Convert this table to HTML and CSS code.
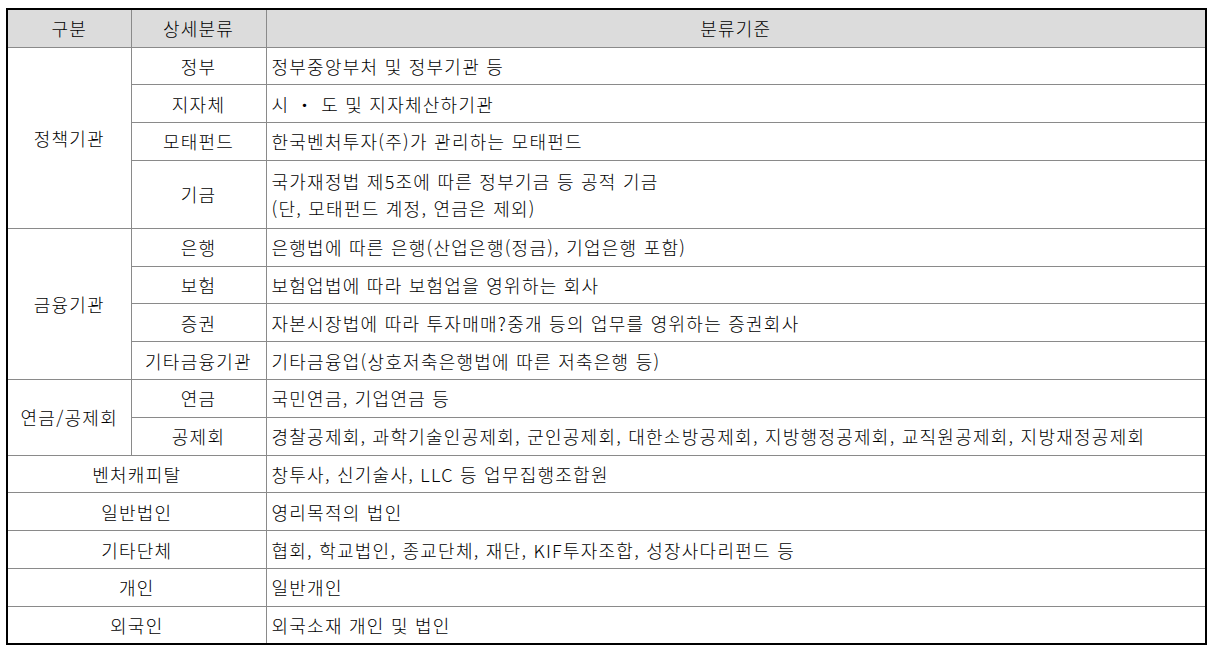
FILE: index.html
```html
<!DOCTYPE html>
<html lang="ko">
<head>
<meta charset="utf-8">
<link rel="stylesheet" href="styles.css">
</head>
<body>
<table class="grid">
  <colgroup>
    <col class="c1"><col class="c2"><col class="c3">
  </colgroup>
  <thead>
    <tr class="head"><th>구분</th><th>상세분류</th><th>분류기준</th></tr>
  </thead>
  <tbody>
    <tr><td class="grp" rowspan="4">정책기관</td><td class="sub">정부</td><td class="desc">정부중앙부처 및 정부기관 등</td></tr>
    <tr><td class="sub">지자체</td><td class="desc">시 ・ 도 및 지자체산하기관</td></tr>
    <tr><td class="sub">모태펀드</td><td class="desc">한국벤처투자(주)가 관리하는 모태펀드</td></tr>
    <tr class="tall"><td class="sub">기금</td><td class="desc"><div class="ln">국가재정법 제5조에 따른 정부기금 등 공적 기금</div><div class="ln">(단, 모태펀드 계정, 연금은 제외)</div></td></tr>
    <tr><td class="grp" rowspan="4">금융기관</td><td class="sub">은행</td><td class="desc">은행법에 따른 은행(산업은행(정금), 기업은행 포함)</td></tr>
    <tr><td class="sub">보험</td><td class="desc">보험업법에 따라 보험업을 영위하는 회사</td></tr>
    <tr><td class="sub">증권</td><td class="desc">자본시장법에 따라 투자매매?중개 등의 업무를 영위하는 증권회사</td></tr>
    <tr><td class="sub">기타금융기관</td><td class="desc">기타금융업(상호저축은행법에 따른 저축은행 등)</td></tr>
    <tr><td class="grp" rowspan="2">연금/공제회</td><td class="sub">연금</td><td class="desc">국민연금, 기업연금 등</td></tr>
    <tr><td class="sub">공제회</td><td class="desc">경찰공제회, 과학기술인공제회, 군인공제회, 대한소방공제회, 지방행정공제회, 교직원공제회, 지방재정공제회</td></tr>
    <tr><td class="grp" colspan="2">벤처캐피탈</td><td class="desc">창투사, 신기술사, LLC 등 업무집행조합원</td></tr>
    <tr><td class="grp" colspan="2">일반법인</td><td class="desc">영리목적의 법인</td></tr>
    <tr><td class="grp" colspan="2">기타단체</td><td class="desc">협회, 학교법인, 종교단체, 재단, KIF투자조합, 성장사다리펀드 등</td></tr>
    <tr><td class="grp" colspan="2">개인</td><td class="desc">일반개인</td></tr>
    <tr><td class="grp" colspan="2">외국인</td><td class="desc">외국소재 개인 및 법인</td></tr>
  </tbody>
</table>
</body>
</html>
```

FILE: styles.css
```css
html, body {
  margin: 0;
  padding: 0;
  background: #ffffff;
}
body {
  padding: 8px 0 0 6px;
  font-family: "Noto Sans CJK KR", "Noto Sans", sans-serif;
  font-size: 18px;
  letter-spacing: 1.25px;
  color: #000;
}
.grid {
  border-collapse: collapse;
  width: 1201px;
  border: 2px solid #000;
  table-layout: fixed;
}
.c1 { width: 124px; }
.c2 { width: 135px; }
.c3 { width: auto; }
.grid th, .grid td {
  border: 1px solid #8a8a8a;
  padding: 0;
  height: 37.8px;
  box-sizing: border-box;
  font-weight: 300;
  line-height: 1;
  white-space: nowrap;
}
.grid th {
  background: #dcdcdc;
  text-align: center;
  height: 38px;
}
.grp, .sub {
  text-align: center;
  padding-left: 1px;
}
.desc {
  text-align: left;
  padding-left: 5px !important;
}
.tall td {
  height: 68px;
}
.ln + .ln {
  margin-top: 9px;
}
```
